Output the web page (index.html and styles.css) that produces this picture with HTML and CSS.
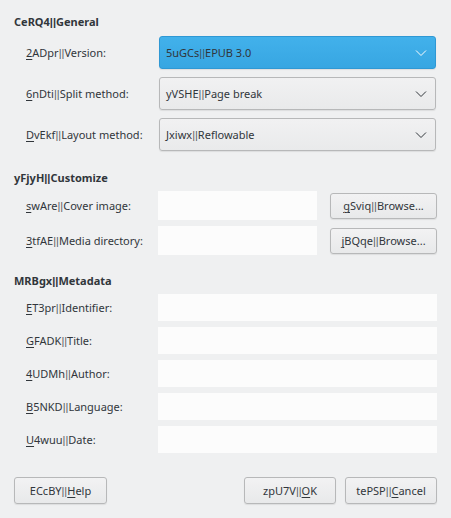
FILE: index.html
```html
<!DOCTYPE html>
<html>
<head>
<meta charset="utf-8">
<link rel="stylesheet" href="styles.css">
</head>
<body>
<div class="dialog">
  <section class="group general">
    <h2 class="heading">CeRQ4<span class="sep">||</span>General</h2>
    <div class="rows combos">
      <div class="row">
        <label class="label"><u>2</u>ADpr<span class="sep">||</span>Version:</label>
        <div class="combo active"><span>5uGCs<span class="sep">||</span>EPUB 3.0</span><svg class="chev" width="12" height="8" viewBox="0 0 12 8"><path d="M1 1.5 L6 6.5 L11 1.5" fill="none" stroke="#fcfcfc" stroke-width="1"/></svg></div>
      </div>
      <div class="row">
        <label class="label"><u>6</u>nDti<span class="sep">||</span>Split method:</label>
        <div class="combo"><span>yVSHE<span class="sep">||</span>Page break</span><svg class="chev" width="12" height="8" viewBox="0 0 12 8"><path d="M1 1.5 L6 6.5 L11 1.5" fill="none" stroke="#31363b" stroke-width="1"/></svg></div>
      </div>
      <div class="row">
        <label class="label"><u>D</u>vEkf<span class="sep">||</span>Layout method:</label>
        <div class="combo"><span>Jxiwx<span class="sep">||</span>Reflowable</span><svg class="chev" width="12" height="8" viewBox="0 0 12 8"><path d="M1 1.5 L6 6.5 L11 1.5" fill="none" stroke="#31363b" stroke-width="1"/></svg></div>
      </div>
    </div>
  </section>
  <section class="group customize">
    <h2 class="heading">yFjyH<span class="sep">||</span>Customize</h2>
    <div class="rows browse">
      <div class="row">
        <label class="label"><u>s</u>wAre<span class="sep">||</span>Cover image:</label>
        <div class="pair"><div class="input tall"></div><button class="btn browse-btn"><u>g</u>Sviq<span class="sep">||</span>Browse...</button></div>
      </div>
      <div class="row">
        <label class="label"><u>3</u>tfAE<span class="sep">||</span>Media directory:</label>
        <div class="pair"><div class="input tall"></div><button class="btn browse-btn"><u>j</u>BQqe<span class="sep">||</span>Browse...</button></div>
      </div>
    </div>
  </section>
  <section class="group metadata">
    <h2 class="heading">MRBgx<span class="sep">||</span>Metadata</h2>
    <div class="rows meta">
      <div class="row"><label class="label"><u>E</u>T3pr<span class="sep">||</span>Identifier:</label><div class="input"></div></div>
      <div class="row"><label class="label"><u>G</u>FADK<span class="sep">||</span>Title:</label><div class="input"></div></div>
      <div class="row"><label class="label"><u>4</u>UDMh<span class="sep">||</span>Author:</label><div class="input"></div></div>
      <div class="row"><label class="label"><u>B</u>5NKD<span class="sep">||</span>Language:</label><div class="input"></div></div>
      <div class="row"><label class="label"><u>U</u>4wuu<span class="sep">||</span>Date:</label><div class="input"></div></div>
    </div>
  </section>
  <div class="buttons">
    <button class="btn help">ECcBY<span class="sep">||</span><u>H</u>elp</button>
    <div class="spacer"></div>
    <button class="btn ok">zpU7V<span class="sep">||</span><u>O</u>K</button>
    <button class="btn cancel">tePSP<span class="sep">||</span><u>C</u>ancel</button>
  </div>
</div>
</body>
</html>
```

FILE: styles.css
```css
* { box-sizing: border-box; }
html, body { margin: 0; padding: 0; }
body {
  background: #eff0f1;
  color: #31363b;
  font-family: "Noto Sans", "DejaVu Sans", sans-serif;
  font-size: 11px;
  width: 451px;
  height: 518px;
  overflow: hidden;
}
u { text-decoration: underline; text-underline-offset: 2px; text-decoration-thickness: 1px; }
.sep { font-family: "Liberation Sans", sans-serif; font-weight: normal; color: #5a5f64; }
.heading .sep { font-weight: bold; color: inherit; }
.dialog { padding: 14px 14px 0 14px; display: flex; flex-direction: column; }
.heading {
  margin: 0;
  font-size: 11px;
  font-weight: bold;
  line-height: 16px;
  height: 16px;
}
.rows { display: flex; flex-direction: column; padding-left: 12px; }
.row { display: grid; grid-template-columns: 132px 1fr; align-items: center; }
.label { line-height: 16px; }

.combos { margin-top: 6px; gap: 8px; }
.combo {
  height: 33px;
  margin-left: 1px;
  margin-right: 1px;
  border: 1px solid #b7b8b9;
  border-radius: 3px;
  background: linear-gradient(#f1f1f2, #e9eaeb);
  box-shadow: 0 1px 1px rgba(0,0,0,0.08);
  display: flex;
  align-items: center;
  justify-content: space-between;
  padding: 0 8px 0 6px;
}
.combo.active {
  background: linear-gradient(#42b1eb, #37a6e2);
  border-color: #2f98d4;
  color: #31363b;
}
.combo.active .sep { color: #3f5462; }
.chev { display: block; }

.customize { margin-top: 19px; }
.browse { margin-top: 5px; gap: 6px; }
.pair { display: flex; align-items: center; gap: 13px; }
.input { height: 27px; background: #fcfcfc; }
.input.tall { height: 29px; flex: 1; }
.btn {
  font-family: inherit;
  font-size: 11px;
  color: #31363b;
  border: 1px solid #b7b8b9;
  border-radius: 3px;
  background: linear-gradient(#f2f2f3, #e8e9ea);
  box-shadow: 0 1px 1px rgba(0,0,0,0.08);
  padding: 0;
  height: 26px;
}
.browse-btn { width: 107px; flex: none; }

.metadata { margin-top: 18px; }
.meta { margin-top: 5px; gap: 6px; }

.buttons { display: flex; margin-top: 24px; gap: 9px; }
.spacer { flex: 1; }
.help { width: 93px; height: 27px; }
.ok { width: 92px; height: 27px; }
.cancel { width: 92px; height: 27px; }
```
